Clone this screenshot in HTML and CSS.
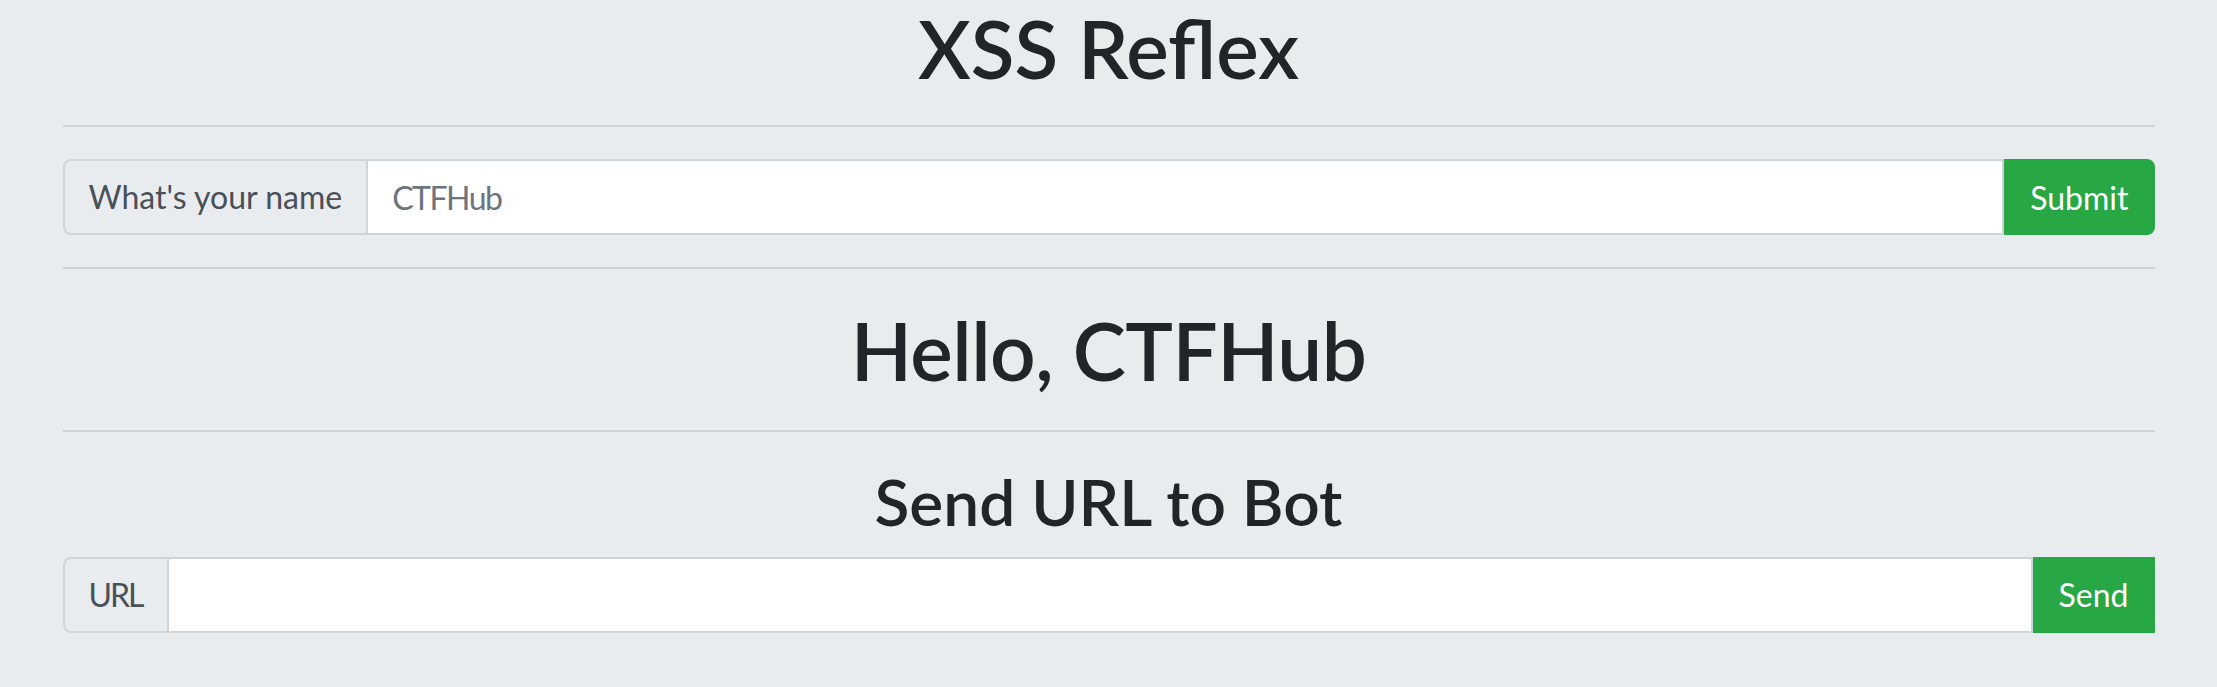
FILE: index.html
```html
<!DOCTYPE html>
<html lang="en">
<head>
<meta charset="utf-8">
<title>XSS Reflex</title>
<link rel="stylesheet" href="styles.css">
</head>
<body>
<div class="container">
  <h1 class="title">XSS Reflex</h1>
  <hr class="rule rule-top">
  <form class="input-group">
    <span class="input-group-text">What's your name</span>
    <input class="form-control" type="text" name="name" placeholder="CTFHub">
    <button class="btn btn-success btn-rounded" type="submit">Submit</button>
  </form>
  <hr class="rule">
  <h1 class="title greeting">Hello, CTFHub</h1>
  <hr class="rule">
  <h2 class="subtitle">Send URL to Bot</h2>
  <form class="input-group">
    <span class="input-group-text label-short">URL</span>
    <input class="form-control" type="text" name="url">
    <button class="btn btn-success" type="submit">Send</button>
  </form>
</div>
</body>
</html>
```

FILE: styles.css
```css
* {
  box-sizing: border-box;
}

html, body {
  margin: 0;
  padding: 0;
}

body {
  background: #e9ecef;
  color: #212529;
  font-family: "Lato", "Open Sans", sans-serif;
  font-size: 32px;
  line-height: 1.5;
}

.container {
  width: 2092px;
  margin: 0 auto;
}

.title,
.subtitle {
  font-family: "Lato Semibold", "Lato Medium", "Lato", sans-serif;
  font-weight: 600;
  line-height: 1.2;
  text-align: center;
}

.title {
  margin: 0;
  font-size: 80px;
}

.greeting {
  letter-spacing: -0.5px;
  padding-top: 1px;
}

.subtitle {
  margin: 0 0 16px;
  font-size: 64px;
}

.rule {
  margin: 32px 0;
  border: 0;
  border-top: 2px solid rgba(0, 0, 0, 0.1);
  height: 0;
}

.rule-top {
  margin-top: 29px;
}

.input-group {
  display: flex;
  align-items: stretch;
  height: 76px;
  margin: 0;
}

.input-group-text {
  display: flex;
  align-items: center;
  padding: 0 24px;
  background: #e9ecef;
  color: #495057;
  border: 2px solid #ced4da;
  border-radius: 8px 0 0 8px;
  white-space: nowrap;
}

.label-short {
  letter-spacing: -2px;
}

.form-control {
  flex: 1 1 auto;
  min-width: 0;
  margin: 0 0 0 -2px;
  padding: 0 24px;
  background: #fff;
  color: #495057;
  border: 2px solid #ced4da;
  border-radius: 0;
  font-family: inherit;
  font-size: 32px;
  outline: none;
}

.form-control::placeholder {
  color: #6c757d;
  opacity: 1;
  letter-spacing: -1.5px;
}

.btn {
  display: flex;
  align-items: center;
  padding: 0 24px;
  margin: 0;
  border: 2px solid #28a745;
  background: #28a745;
  color: #fff;
  font-family: inherit;
  font-size: 32px;
  border-radius: 0;
  cursor: pointer;
}

.btn-rounded {
  border-radius: 0 8px 8px 0;
}
```
